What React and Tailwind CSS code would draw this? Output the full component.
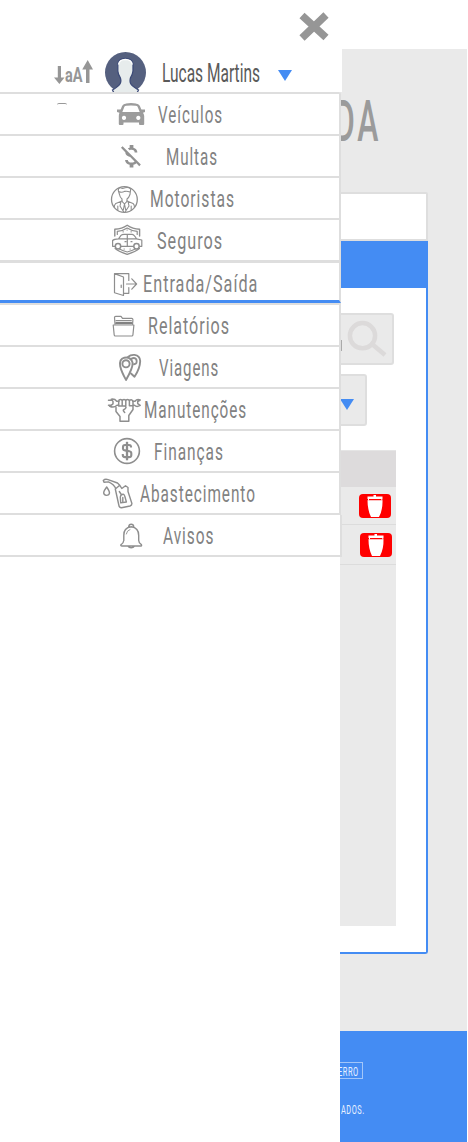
import React, { useLayoutEffect, useRef } from "react";
import { MdMoneyOff } from "react-icons/md";

// Condenses its text horizontally so that it fills the width of its box.
function Fit({ className, children }) {
  const box = useRef(null);
  const text = useRef(null);
  useLayoutEffect(() => {
    const ratio = box.current.clientWidth / text.current.offsetWidth;
    text.current.style.transform = `scaleX(${ratio})`;
  }, []);
  return (
    <div ref={box} className={`shrink-0 whitespace-nowrap ${className}`}>
      <span ref={text} className="inline-block origin-left">{children}</span>
    </div>
  );
}

function Icon({ children, sw = 1.2 }) {
  return (
    <svg className="ml-[100px] h-10 w-[45px] shrink-0 overflow-visible" viewBox="0 0 45 40" fill="none" stroke="#8e8e8e" strokeWidth={sw} strokeLinecap="round" strokeLinejoin="round">
      {children}
    </svg>
  );
}

const CarIcon = () => (
  <Icon>
    <path d="M20.8 18.5 L23.3 12.3 Q24.1 10.8 26.2 10.6 Q31 9.9 35.8 10.6 Q37.9 10.8 38.7 12.3 L41.2 18.5" stroke="#9c9c9c" strokeWidth="2.4" />
    <path fill="#9c9c9c" stroke="none" fillRule="evenodd" d="M17 15.6 H21.5 L22 18 H40 L40.5 15.6 H45 V18 L43 18.8 Q44.2 20.5 44.2 22 V30 Q44.2 31 43.2 31 H40 Q39 31 39 30 V28.5 H23.5 V30 Q23.5 31 22.5 31 H19.8 Q18.8 31 18.8 30 V22 Q18.8 20 19.5 18.8 L17 18 Z M24 21.8 a2.1 2.1 0 1 0 0.01 0 Z M38.3 21.8 a2.1 2.1 0 1 0 0.01 0 Z" />
  </Icon>
);

const DriverIcon = () => (
  <Icon sw={1.1}>
    <circle cx="24.4" cy="21.5" r="12.9" strokeWidth="1.3" />
    <path d="M19.5 16.5 L18.3 12.5 Q18 10.5 20 9.6 Q22 11 25 9.7 Q29 8.8 30.7 11 L30 16.5 Q29 19.5 27 21 V23.3 L24.5 26 L22 23.3 V21 Q20 19.5 19.5 16.5 Z M19.2 13.8 Q22 15 24.5 13.4 Q27 12.8 30 14" />
    <path d="M22 23 L15.8 25.4 Q14.2 27 14.3 29 M27 23 L33 25.4 Q34.5 27 34.5 29 M21 23.4 L20 28 L23.6 33.8 M28 23.4 L29 28 L25.2 33.8 M24.5 26 L23.3 32 M24.5 26 L25.7 32 M17.8 28 V32 M31.2 28 V32" />
  </Icon>
);

const InsuranceIcon = () => (
  <Icon sw={1.2}>
    <path d="M14.8 16 V9.3 Q22 9 27.2 5.3 Q32.5 9 39.6 9.3 V16 M15.2 28.5 Q18.5 31.5 27.2 34.4 Q36 31.5 39.3 28.5" strokeWidth="1.4" />
    <path d="M17.3 14.5 V11.3 Q23 11 27.2 8 Q31.5 11 37.2 11.3 V14.5 M19.5 29 Q22 30.5 27.2 32 Q32.5 30.5 35.2 29" />
    <path d="M14.8 26.3 H12.6 V20.5 Q14 18.9 18.5 18.8 L21 15.4 Q22 14.4 24 14.4 H32 Q34 14.5 36.5 18.8 L41.8 20 V26.3 H39.8 M21.3 26.3 H33.2 M19 18.9 H37 M27.3 14.4 V26 M25 21.7 H26 M31 21.7 H32" />
    <circle cx="18" cy="26.3" r="2.7" strokeWidth="1.5" /><circle cx="36.5" cy="26.3" r="2.7" strokeWidth="1.5" />
    <path d="M23 11.8 h.3 M31 11.8 h.3 M27 10 h.3 M24 29 h.3 M30 29 h.3" />
  </Icon>
);

const DoorIcon = () => (
  <Icon sw={1.2}>
    <path d="M14.5 10.6 H28.8 V17.5 M28.8 24.5 V30.3 H24 M14.5 10.6 L23.5 14 V32.5 L14.5 29.8 Z M21.2 22 V24.5 M26.5 21 H36 M31.8 15.8 L36.6 21 L31.8 26.2" />
  </Icon>
);

const FolderIcon = () => (
  <Icon sw={1.2}>
    <path d="M15 19.3 L14.5 12.4 Q14.5 11.3 15.7 11.3 H21 L22.5 13.4 H31.7 Q33 13.4 32.9 15 L32.6 19.3" />
    <path d="M16 15.7 H31.3" /><path d="M16.3 18.2 H31.5" strokeWidth="2.3" stroke="#828282" />
    <path d="M13.2 20 H33.9 L32.9 30 Q32.8 31 31.8 31 H15.3 Q14.3 31 14.2 30 Z" />
  </Icon>
);

const PinsIcon = () => (
  <Icon sw={1.9}>
    <path d="M26 32.9 Q21.5 25 20.2 19.3 Q19 12 24.3 10.7 Q31 9.5 32.6 15.8 Q33 21 26 32.9 Z" />
    <circle cx="26" cy="16.8" r="3.6" />
    <path d="M28 10 Q30.5 7.6 34.5 7.9 Q40 8.7 40.2 14 Q40 21.5 34.5 29.8 L31 26.5 M31.3 11.9 Q34.5 9.8 36.3 12.4 Q37.8 16.8 34 17.3" />
  </Icon>
);

const WrenchIcon = () => (
  <Icon sw={1.5}>
    <path d="M19 12.2 H16.7 Q14.8 9.7 11.3 10.2 L13 12.4 V14.8 L11 16.3 H8.5 M8.5 11.2 H12 M9.5 17 Q13.5 19.5 17 16.3 H18" />
    <path d="M33 12.2 H35 Q37 9.7 40.2 11 L37.7 12.5 V14.7 L40.2 16.4 Q36.8 18.5 34.5 16.3 H33.2" />
    <path d="M18.7 17 V12.2 Q18.8 10.6 20.5 10.6 Q22 10.6 22.2 12 Q22.4 10.6 24 10.6 Q25.6 10.6 25.8 12 Q26 10.6 27.5 10.6 Q29 10.6 29.4 12 Q29.8 10.6 31.3 10.8 Q33 11 33 13 V20.5 L28.8 26.5 V32.3 H20 V27.5 L16 22.5 V18.5 M18.7 17 H25 Q27.5 18.5 24 20.5 Q22.3 21 24.7 23.5 M22.2 12 V16 M25.8 12 V16.4 M29.4 12 V16.8 H32.5" />
  </Icon>
);

const CoinIcon = () => (
  <Icon>
    <circle cx="27" cy="20" r="12.4" strokeWidth="1.6" />
    <path d="M31 16.4 V15.5 Q30.8 14 29 14 H25 Q23 14 23 16 V17.8 Q23.2 19.2 25 19.4 L29.3 20.3 Q31.3 20.7 31.3 22.3 V24.2 Q31.2 26.1 29 26.1 H25 Q22.8 26.1 22.8 24 V23" strokeWidth="2.1" strokeLinecap="butt" />
    <path d="M27 10.8 V29.3" strokeWidth="2.3" strokeLinecap="butt" />
  </Icon>
);

const FuelIcon = () => (
  <Icon sw={1.4}>
    <path d="M6.7 14 Q9.5 18 9.5 20 Q9.2 22.4 6.5 22.4 Q3.7 22.2 3.7 19.8 Q3.8 17.8 6.7 14 Z" />
    <path d="M3.3 7.4 Q5 5.7 8 6.6 L17.5 10 L20 12.5 M3.3 7.4 L4 9.2 L8.5 8.9 Q14 11.5 15.8 15.5 M15.3 16 L19.8 12.3 L21.8 15.5 L25.5 12.7 L28 14.5 V18.5 L31.9 30.5 Q32 32.3 30 33 L21.5 34.7 Q19 34.7 18.8 32 L15.3 16 M19.3 18.5 L21.3 21.5" />
    <path d="M20.7 29.9 L20.3 24 Q20.7 21.3 23.2 21.2 Q24.7 21.8 25 24 L26.4 29 Z M22.8 29 V24.5" />
  </Icon>
);

const BellIcon = () => (
  <Icon sw={1.4}>
    <path d="M23.8 25.5 V20.5 Q23.5 12.7 31.2 11.7 Q38.8 12.7 38.7 20.5 V25.5 M23.8 25.5 Q23.5 28 21 29.7 Q20.3 31 22 31 H40.2 Q42.2 31 41.4 29.7 Q38.8 28 38.7 25.5 M28.7 12 Q28.9 9.3 31.2 9.3 Q33.5 9.3 33.8 12 M28.2 31.3 Q29 32.7 31.2 32.7 Q33.4 32.7 34.2 31.3" />
    <path d="M26.3 19 Q26.8 15.5 30 14.5" strokeWidth=".9" />
  </Icon>
);

const items = [
  { label: "Veículos", icon: <CarIcon />, row: "h-[42px] border-b-2 border-[#dedede]", text: "ml-[13px] w-[65px]" },
  { label: "Multas", icon: <Icon><MdMoneyOff x="15.9" y="5.2" width="30" height="30" size={30} color="#929292" stroke="none" /></Icon>, row: "h-[42px] border-b-2 border-[#dedede]", text: "ml-[21px] w-[52px]" },
  { label: "Motoristas", icon: <DriverIcon />, row: "h-[42px] border-b-2 border-[#dedede]", text: "ml-[5px] w-[85px]" },
  { label: "Seguros", icon: <InsuranceIcon />, row: "h-[43px] border-b-3 border-[#dedede]", text: "ml-[12px] w-[66px]" },
  { label: "Entrada/Saída", icon: <DoorIcon />, row: "h-[40px] border-b-3 border-b-[#448cf3] border-r-[#dedede]", text: "ml-[-2px] w-[115px]" },
  { label: "Relatórios", icon: <FolderIcon />, row: "h-[44px] border-t-2 border-b-2 border-[#dedede]", text: "ml-[3px] w-[82px]" },
  { label: "Viagens", icon: <PinsIcon />, row: "h-[42px] border-b-2 border-[#dedede]", text: "ml-[14px] w-[60px]" },
  { label: "Manutenções", icon: <WrenchIcon />, row: "h-[42px] border-b-2 border-[#dedede]", text: "ml-[-1px] w-[103px]" },
  { label: "Finanças", icon: <CoinIcon />, row: "h-[42px] border-b-2 border-[#dedede]", text: "ml-[9px] w-[70px]" },
  { label: "Abastecimento", icon: <FuelIcon />, row: "h-[42px] border-b-2 border-[#dedede]", text: "ml-[-5px] w-[116px]" },
  { label: "Avisos", icon: <BellIcon />, row: "h-[42px] w-[342px] border-b-2 border-[#dedede]", text: "ml-[18px] w-[51px]" },
];

function Profile() {
  return (
    <div className="flex h-[43px] w-[342px] items-start bg-white pl-[54px]">
      <svg className="mt-[11px] h-[26px] w-[39px] shrink-0 overflow-visible" viewBox="0 0 39 26" fill="#969696">
        <path d="M3.8 6 H7 V17.5 H10.5 L5.4 24 L0 17.5 H3.8 Z M32 23 V9.5 H28.2 L33.7 0 L39 9.5 H35.5 V23 Z" />
        <text x="11" y="22.2" fontFamily="Roboto" fontWeight="700" fontSize="21" textLength="17.5" lengthAdjust="spacingAndGlyphs">aA</text>
      </svg>
      <svg className="ml-[12px] mt-[3px] h-[40px] w-[41px] shrink-0" viewBox="0 0 41 40">
        <circle cx="20.5" cy="20.5" r="20.5" fill="#55607f" />
        <path d="M7.5 38 Q14 34 15.2 31.5 Q16.5 29 15.2 25.5 Q13.2 22.5 12.8 19 V12 Q13.5 6.8 20.4 6.5 Q27.3 6.8 28 12 V19 Q27.6 22.5 25.6 25.5 Q24.5 29 25.6 31.5 Q26.8 34 33.5 38 L32 41 H9 Z" fill="#e7ecec" stroke="#3d4b78" strokeWidth="1.3" />
        <path d="M13.5 12.5 Q14.3 7.5 20.4 7.3 Q26.5 7.5 27.3 12.5" fill="none" stroke="#fff" strokeWidth="1.3" />
      </svg>
      <Fit className="ml-[16px] mt-[7px] w-[98px] text-[25px] leading-9 text-[#5a5a5a]">Lucas Martins</Fit>
      <svg className="ml-[18px] mt-[21px] h-[11px] w-[14px] shrink-0" viewBox="0 0 14 11"><path d="M0 0 H14 L7 11 Z" fill="#448cf3" /></svg>
    </div>
  );
}

function Drawer() {
  return (
    <aside className="absolute left-0 top-0 flex h-[1142px] w-[340px] flex-col bg-white">
      <div className="flex h-[49px] shrink-0 items-start pl-[299px] pt-[12px]">
        <svg className="h-[29px] w-[30px]" viewBox="0 0 30 29"><path d="M3 3.5 L27 25.5 M27 3 L3 26" stroke="#969696" strokeWidth="7.5" /></svg>
      </div>
      <Profile />
      <nav className="flex w-[341px] flex-col rounded-tr-[2px] border-t-2 border-[#dedede] text-[#828282]">
        {items.map((it, i) => (
          <div key={it.label} className={`relative flex items-start border-r-2 bg-white ${it.row}`}>
            {i === 0 && <span className="absolute left-[57px] top-[9px] h-[2px] w-[10px] rounded-t-full border-t border-[#999]" />}
            {it.icon}
            <Fit className={`pt-px text-[24.5px] leading-10 tracking-[1.5px] ${it.text}`}>{it.label}</Fit>
          </div>
        ))}
      </nav>
    </aside>
  );
}

function DeleteButton() {
  return (
    <svg className="h-6 w-8 shrink-0" viewBox="0 0 32 24">
      <rect width="32" height="24" rx="4" fill="red" />
      <path d="M8.5 2.5 H14.5 V1 H17 V2.5 H23.5 V5 H8.5 Z M8.5 6.3 H23.5 Q23.8 16 20 23 H12 Q8.5 16 8.5 6.3 Z" fill="#fff" />
      <path d="M9.5 5 V6.4 M22.8 5 V6.4" stroke="#fff" />
    </svg>
  );
}

function Page() {
  return (
    <div className="flex h-[1142px] flex-col bg-[#eaeaea]">
      <header className="h-[49px] shrink-0 bg-white" />
      <div className="flex h-[143px] shrink-0 pl-[334px] pt-[39px]">
        <Fit className="w-[47px] text-[57px] font-medium leading-[68px] tracking-[5px] text-[#9b9b9b]">DA</Fit>
      </div>
      <main className="flex h-[762px] w-[428px] shrink-0 flex-col">
        <div className="h-[49px] rounded-tr-[2px] border-2 border-[#dedede] bg-white" />
        <div className="h-[47px] bg-[#448cf3]" />
        <div className="flex h-[666px] flex-col rounded-br-[3px] border-b-2 border-r-2 border-[#448cf3] bg-white pt-[25px]">
          <div className="flex h-[52px] w-[394px] items-start justify-end rounded-[3px] border-2 border-[#dedede] bg-[#eaeaea] pr-[5px] pt-[5px]">
            <span className="mr-[5px] mt-[20px] h-[11px] w-px bg-[#aaa]" />
            <svg className="h-[38px] w-[40px]" viewBox="0 0 40 38" fill="none" stroke="#dcdada"><circle cx="15.5" cy="15.7" r="12.6" strokeWidth="4.5" /><path d="M25 24 L38 35" strokeWidth="4.5" /></svg>
          </div>
          <div className="mt-[9px] flex h-[52px] w-[367px] items-start justify-end rounded-[3px] border-2 border-[#dedede] bg-[#eaeaea] pr-[11px] pt-[23px]">
            <svg className="h-[11px] w-[14px]" viewBox="0 0 14 11"><path d="M0 0 H14 L7 11 Z" fill="#448cf3" /></svg>
          </div>
          <div className="mt-[24px] flex h-[476px] w-[396px] flex-col bg-[#eaeaea]">
            <div className="h-[37px] border-t border-[#e5e5e5] bg-[#dddbdc]" />
            <div className="flex h-[38px] items-start justify-end border-b border-[#dcdcdc] pr-[5px] pt-[7px]"><DeleteButton /></div>
            <div className="flex h-[40px] items-start justify-end border-b border-[#dcdcdc] pr-[4px] pt-[8px]"><DeleteButton /></div>
          </div>
        </div>
      </main>
      <footer className="mt-[77px] flex h-[111px] shrink-0 flex-col bg-[#448cf3] text-[13.5px] leading-[15px] text-[#e8f1ff]">
        <div className="mt-[31px] flex h-[17px] w-[363px] justify-end border border-[#a2c6f9] pr-[3px] pt-px">
          <Fit className="w-[21px] tracking-[1px]">ERRO</Fit>
        </div>
        <div className="mt-[23px] flex w-[365px] justify-end">
          <Fit className="w-[24px] tracking-[1px]">ADOS.</Fit>
        </div>
      </footer>
    </div>
  );
}

export default function App() {
  return (
    <div className="relative h-[1142px] w-[467px] overflow-hidden bg-white font-['Roboto',sans-serif]">
      <Page />
      <Drawer />
    </div>
  );
}
